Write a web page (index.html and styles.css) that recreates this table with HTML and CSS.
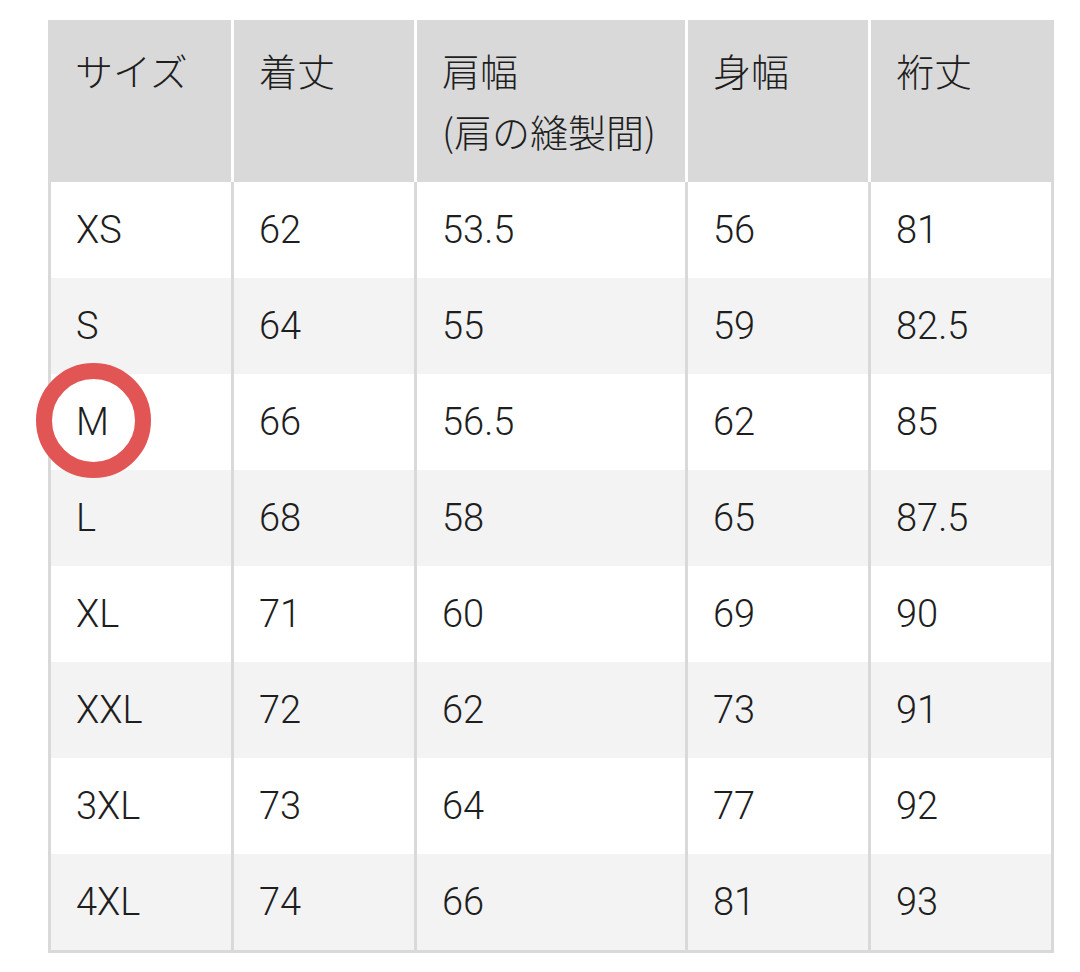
FILE: index.html
```html
<!DOCTYPE html>
<html lang="ja">
<head>
<meta charset="utf-8">
<link rel="stylesheet" href="styles.css">
</head>
<body>
<div class="wrap">
  <div class="table">
    <div class="th first">サイズ</div>
    <div class="th">着丈</div>
    <div class="th">肩幅<br>(肩の縫製間)</div>
    <div class="th">身幅</div>
    <div class="th last">裄丈</div>

    <div class="td first">XS</div><div class="td">62</div><div class="td">53.5</div><div class="td">56</div><div class="td">81</div>
    <div class="td first alt">S</div><div class="td alt">64</div><div class="td alt">55</div><div class="td alt">59</div><div class="td alt">82.5</div>
    <div class="td first">M</div><div class="td">66</div><div class="td">56.5</div><div class="td">62</div><div class="td">85</div>
    <div class="td first alt">L</div><div class="td alt">68</div><div class="td alt">58</div><div class="td alt">65</div><div class="td alt">87.5</div>
    <div class="td first">XL</div><div class="td">71</div><div class="td">60</div><div class="td">69</div><div class="td">90</div>
    <div class="td first alt">XXL</div><div class="td alt">72</div><div class="td alt">62</div><div class="td alt">73</div><div class="td alt">91</div>
    <div class="td first">3XL</div><div class="td">73</div><div class="td">64</div><div class="td">77</div><div class="td">92</div>
    <div class="td first alt">4XL</div><div class="td alt">74</div><div class="td alt">66</div><div class="td alt">81</div><div class="td alt">93</div>
  </div>
  <div class="mark"></div>
</div>
</body>
</html>
```
FILE: styles.css
```css
* { box-sizing: border-box; }
html, body { margin: 0; padding: 0; background: #fff; }
body {
  font-family: Roboto, "Noto Sans CJK JP", sans-serif;
  font-weight: 300;
  color: #1e1e1e;
  font-size: 38px;
}
.wrap {
  position: relative;
  padding: 20px 0 0 48px;
}
.table {
  display: grid;
  grid-template-columns: 186px 183px 271px 183px 183px;
  width: 1006px;
  border-bottom: 3px solid #d9d9d9;
}
.th {
  background: #d9d9d9;
  height: 162px;
  padding: 19px 0 0 25px;
  line-height: 61px;
  font-family: "Noto Sans CJK JP", sans-serif;
  font-weight: 300;
  font-size: 38px;
  border-right: 3px solid #fff;
}
.th.first { padding-left: 27px; }
.th.last { border-right: none; }
.td {
  height: 96px;
  display: flex;
  align-items: center;
  padding-left: 25px;
  background: #fff;
  border-right: 3px solid #d9d9d9;
}
.td.first { border-left: 3px solid #d9d9d9; }
.td.alt { background: #f3f3f3; }
.mark {
  position: absolute;
  left: 36px;
  top: 363px;
  width: 115px;
  height: 115px;
  border-radius: 50%;
  border: 16px solid #e25555;
}
```
